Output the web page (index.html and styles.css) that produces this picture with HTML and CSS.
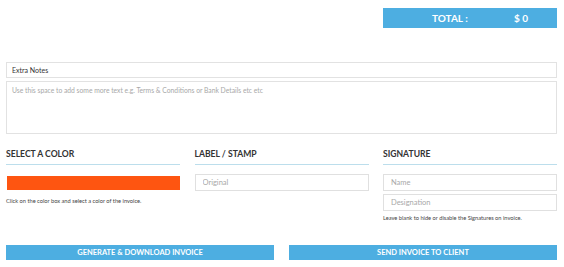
FILE: index.html
```html
<!DOCTYPE html>
<html>
<head>
<meta charset="utf-8">
<link rel="stylesheet" href="styles.css">
</head>
<body>
<div class="page">
  <div class="total-row">
    <div class="total-box">
      <span class="total-label">TOTAL :</span>
      <span class="total-value">$ 0</span>
    </div>
  </div>

  <div class="notes">
    <input class="notes-title" type="text" value="Extra Notes">
    <textarea class="notes-area" placeholder="Use this space to add some more text e.g. Terms &amp; Conditions or Bank Details etc etc"></textarea>
  </div>

  <div class="columns">
    <div class="col">
      <h3 class="col-title">SELECT A COLOR</h3>
      <div class="color-box"></div>
      <p class="help help-color">Click on the color box and select a color of the invoice.</p>
    </div>
    <div class="col">
      <h3 class="col-title">LABEL / STAMP</h3>
      <input class="field" type="text" placeholder="Original">
    </div>
    <div class="col">
      <h3 class="col-title">SIGNATURE</h3>
      <input class="field field-sig" type="text" placeholder="Name">
      <input class="field field-sig" type="text" placeholder="Designation">
      <p class="help help-sig">Leave blank to hide or disable the Signatures on invoice.</p>
    </div>
  </div>

  <div class="actions">
    <div class="btn">GENERATE &amp; DOWNLOAD INVOICE</div>
    <div class="btn">SEND INVOICE TO CLIENT</div>
  </div>
</div>
</body>
</html>
```

FILE: styles.css
```css
html, body {
  margin: 0;
  padding: 0;
  background: #ffffff;
}
body {
  font-family: Lato, "Open Sans", sans-serif;
  color: #333;
}
.page {
  width: 551px;
  padding: 8px 7px 0 6px;
}
.total-row {
  display: flex;
  justify-content: flex-end;
}
.total-box {
  width: 174px;
  height: 20px;
  background: #4daee1;
  color: #fff;
  font-weight: bold;
  font-size: 10px;
  display: flex;
  align-items: center;
  box-sizing: border-box;
  padding-left: 49px;
}
.total-label {
  width: 82px;
}
.notes {
  margin-top: 34px;
  display: flex;
  flex-direction: column;
}
.notes-title,
.notes-area,
.field {
  display: block;
  margin: 0;
  width: 100%;
  box-sizing: border-box;
  font-family: Lato, "Open Sans", sans-serif;
  outline: none;
  background: #fff;
}
.notes-title {
  height: 16px;
  border: 1px solid #e2e2e2;
  font-size: 7px;
  padding: 0 0 0 5px;
  color: #333;
}
.notes-area {
  margin-top: 3px;
  height: 53px;
  border: 1px solid #e2e2e2;
  font-size: 6.75px;
  padding: 4px 5px;
  resize: none;
}
.notes-area::placeholder,
.field::placeholder {
  color: #a8a8a8;
  opacity: 1;
}
.columns {
  display: grid;
  grid-template-columns: 174px 174px 174px;
  column-gap: 14.5px;
  margin-top: 14px;
}
.col-title {
  margin: 0;
  font-size: 8.6px;
  font-weight: bold;
  line-height: 12px;
  color: #333;
  padding-bottom: 4px;
  border-bottom: 1px solid #bcdeec;
}
.color-box {
  margin-top: 11px;
  margin-left: 1px;
  height: 14px;
  background: #fe5511;
}
.field {
  margin-top: 9px;
  height: 17px;
  border: 1px solid #e0e0e0;
  font-size: 7.5px;
  padding: 0 0 0 7px;
  color: #333;
}
.field-sig + .field-sig {
  margin-top: 3px;
}
.help {
  margin: 0;
  font-size: 5.7px;
  line-height: 8px;
  color: #444;
}
.help-color {
  margin-top: 7px;
}
.help-sig {
  margin-top: 3px;
}
.actions {
  display: grid;
  grid-template-columns: 268px 268px;
  column-gap: 15px;
  margin-top: 23px;
}
.btn {
  height: 15px;
  background: #4daee1;
  color: #fff;
  font-weight: bold;
  font-size: 7.5px;
  line-height: 15px;
  text-align: center;
}
```
